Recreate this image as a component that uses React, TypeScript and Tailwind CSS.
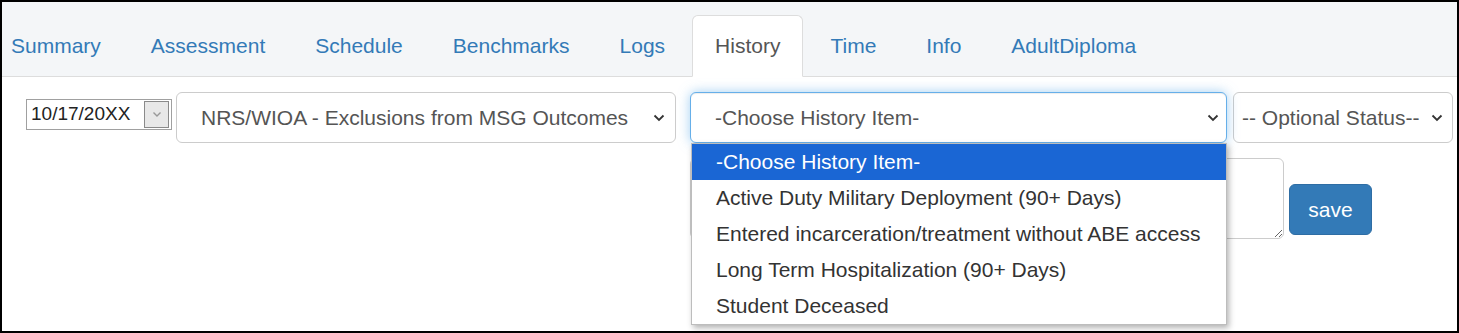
import React from 'react';

const tabs = ['Summary', 'Assessment', 'Schedule', 'Benchmarks', 'Logs', 'History', 'Time', 'Info', 'AdultDiploma'];

const historyItems = [
  '-Choose History Item-',
  'Active Duty Military Deployment (90+ Days)',
  'Entered incarceration/treatment without ABE access',
  'Long Term Hospitalization (90+ Days)',
  'Student Deceased',
];

function Chevron() {
  return (
    <svg width="12" height="8" viewBox="0 0 12 8" className="shrink-0">
      <polyline points="1.5,1.5 6,6 10.5,1.5" fill="none" stroke="#333" strokeWidth="1.8" />
    </svg>
  );
}

function SelectBox({ label, className }: { label: string; className: string }) {
  return (
    <div className={`h-[51px] flex items-center justify-between rounded-[6px] border bg-white text-[21px] text-[#555] ${className}`}>
      <span className="whitespace-nowrap">{label}</span>
      <Chevron />
    </div>
  );
}

export default function App() {
  return (
    <div className="relative w-[1459px] h-[333px] overflow-hidden border-2 border-black bg-white font-['Liberation_Sans',Arial,sans-serif]">
      {/* Tabs */}
      <div className="bg-[#f4f6f8] border-b border-[#ddd] pt-[13px]">
        <ul className="flex -mb-px">
          {tabs.map((t, i) => {
            const active = t === 'History';
            return (
              <li key={t} className="mr-[4px]">
                <div
                  className={`border py-[15px] pr-[22px] text-[21px] leading-[30px] rounded-t-[6px] ${
                    i === 0 ? 'pl-[8px]' : 'pl-[22px]'
                  } ${active ? 'bg-white border-[#ddd] border-b-transparent text-[#555]' : 'border-transparent text-[#337ab7]'}`}
                >
                  {t}
                </div>
              </li>
            );
          })}
        </ul>
      </div>

      {/* Selects row */}
      <div className="flex items-start pt-[15px] pl-[24px]">
        <div className="mt-[7px] w-[146px] h-[31px] flex items-center border border-[#a0a0a0] bg-white pl-[4px] pr-[2px]">
          <span className="flex-1 text-[19px] text-[#222]">10/17/20XX</span>
          <div className="w-[25px] h-[27px] flex items-center justify-center border border-[#8a8a8a] bg-[#e8e8e8]">
            <svg width="10" height="7" viewBox="0 0 10 7">
              <polyline points="1.5,1.5 5,5 8.5,1.5" fill="none" stroke="#999" strokeWidth="1.4" />
            </svg>
          </div>
        </div>

        <SelectBox
          label="NRS/WIOA - Exclusions from MSG Outcomes"
          className="ml-[4px] w-[500px] border-[#ccc] pl-[24px] pr-[10px]"
        />

        <div className="relative ml-[14px]">
          <SelectBox
            label="-Choose History Item-"
            className="w-[537px] border-[#66afe9] pl-[24px] pr-[7px] shadow-[inset_0_1px_1px_rgba(0,0,0,0.075),0_0_12px_rgba(102,175,233,0.6)]"
          />
          {/* Open option list */}
          <div className="absolute top-full left-[1px] right-0 z-10 border border-[#bdbdbd] bg-white shadow-[2px_3px_6px_rgba(0,0,0,0.3)]">
            {historyItems.map((item, i) => (
              <div
                key={item}
                className={`h-[36px] flex items-center pl-[24px] text-[21px] whitespace-nowrap ${
                  i === 0 ? 'bg-[#1a66d4] text-white' : 'text-[#333]'
                }`}
              >
                {item}
              </div>
            ))}
          </div>
        </div>

        <SelectBox label="-- Optional Status--" className="ml-[6px] w-[220px] border-[#ccc] pl-[8px] pr-[9px]" />
      </div>

      {/* Note + save */}
      <div className="flex items-start mt-[15px] ml-[688px]">
        <textarea className="w-[594px] h-[81px] rounded-[6px] border border-[#ccc] bg-white resize" />
        <button className="ml-[5px] mt-[26px] w-[83px] h-[51px] rounded-[6px] border border-[#2e6da4] bg-[#337ab7] text-[21px] text-white">
          save
        </button>
      </div>
    </div>
  );
}
